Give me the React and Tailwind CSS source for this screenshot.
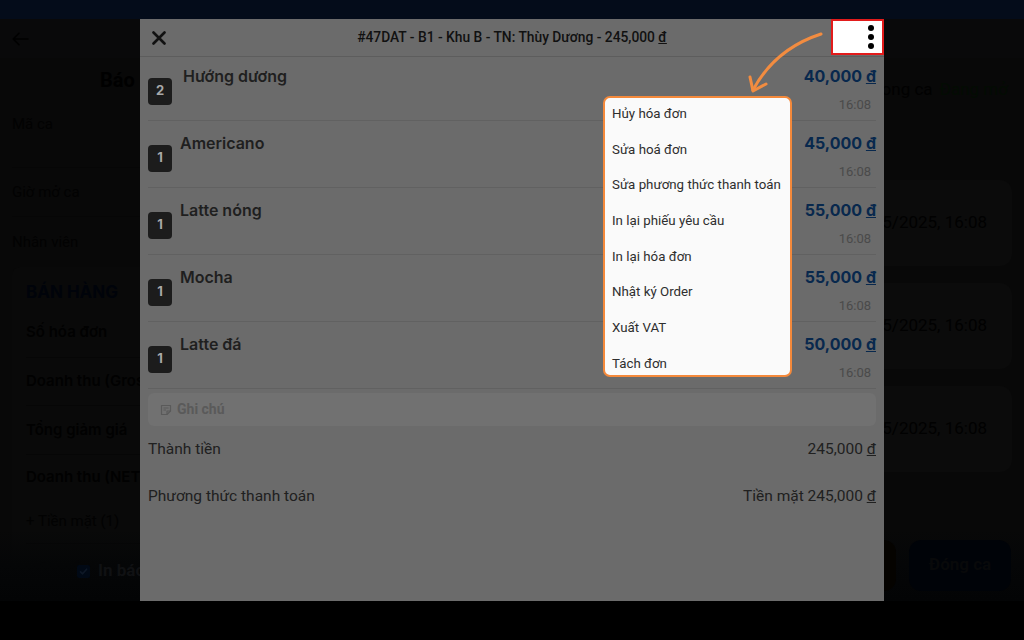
import React from "react";

const items = [
  { qty: 2, name: "Hướng dương", price: "40,000", first: true },
  { qty: 1, name: "Americano", price: "45,000" },
  { qty: 1, name: "Latte nóng", price: "55,000" },
  { qty: 1, name: "Mocha", price: "55,000" },
  { qty: 1, name: "Latte đá", price: "50,000" },
];

const menu = [
  "Hủy hóa đơn",
  "Sửa hoá đơn",
  "Sửa phương thức thanh toán",
  "In lại phiếu yêu cầu",
  "In lại hóa đơn",
  "Nhật ký Order",
  "Xuất VAT",
  "Tách đơn",
];

function BackgroundPage() {
  return (
    <div className="flex h-[582px] flex-col bg-[#080808] font-['Roboto',sans-serif]">
      <div className="flex h-[39px] shrink-0 items-center bg-[#09090a] pl-[12px]">
        <svg width="17" height="14" viewBox="0 0 17 14" fill="none" stroke="#000000" strokeWidth="1.6" strokeLinecap="round" strokeLinejoin="round">
          <path d="M16 7H1.5M7 1.2L1.2 7 7 12.8" />
        </svg>
      </div>
      <div className="flex flex-1">
        <div className="w-[500px] px-[12px]">
          <div className="flex h-[44px] items-center pl-[88px] text-[20px] font-bold text-[#000000]">Báo cáo ca</div>
          <div className="h-[66px] border-b border-[#060606] pt-[13px] text-[15px] leading-[18px] text-[#020202]">Mã ca</div>
          <div className="flex h-[49px] items-center border-b border-[#060606] text-[15px] text-[#020202]">Giờ mở ca</div>
          <div className="flex h-[50px] items-center text-[15px] text-[#020202]">Nhân viên</div>
          <div className="rounded-lg bg-[#090909] px-[14px] pt-[14px] font-['Inter',sans-serif]">
            <div className="text-[17px] font-bold leading-[22px] text-[#00030a]">BÁN HÀNG</div>
            <div className="mt-[5px] flex h-[50px] items-center border-b border-[#060606] text-[15px] font-semibold text-[#010101]">Số hóa đơn</div>
            <div className="flex h-[48px] items-center border-b border-[#060606] text-[15px] font-semibold text-[#010101]">Doanh thu (Gross)</div>
            <div className="flex h-[49px] items-center border-b border-[#060606] text-[15px] font-semibold text-[#010101]">Tổng giảm giá</div>
            <div className="flex h-[45px] items-center text-[15px] font-semibold text-[#010101]">Doanh thu (NET)</div>
            <div className="flex h-[44px] items-center border-b border-[#060606] font-['Roboto',sans-serif] text-[15px] text-[#020202]">+ Tiền mặt (1)</div>
            <div className="flex h-[48px] items-center font-['Roboto',sans-serif] text-[15px] text-[#020202]">+ Chuyển khoản (0)</div>
          </div>
        </div>
        <div className="flex flex-1 flex-col pl-[12px] pr-[12px]">
          <div className="flex h-[64px] items-center justify-end gap-[7px] pr-[4px] text-[17px]">
            <span className="text-[#010101]">Trạng thái trong ca</span>
            <span className="text-[#030c03]">Đang mở</span>
          </div>
          <div className="mt-[58px] flex flex-col gap-[17px]">
            {[0, 1, 2].map((i) => (
              <div key={i} className="flex h-[86px] items-center justify-end rounded-xl bg-[#0b0b0b] pr-[25px] text-[17px] text-[#010101]">
                Mở ca: 19/05/2025, 16:08
              </div>
            ))}
          </div>
        </div>
      </div>
    </div>
  );
}

function BottomBar() {
  return (
    <div className="absolute bottom-0 left-0 right-0 flex h-[72px] items-center bg-gradient-to-b from-transparent via-[#050607] to-[#030405] pl-[77px] pr-[13px] font-['Roboto',sans-serif]">
      <div className="mt-[12px] flex items-center gap-[8px]">
        <div className="flex h-[13px] w-[13px] items-center justify-center rounded-[2px] bg-[#010915]">
          <svg width="9" height="9" viewBox="0 0 9 9" fill="none" stroke="#0e1826" strokeWidth="1.6" strokeLinecap="round" strokeLinejoin="round">
            <path d="M1.5 4.8L3.6 6.8 7.6 2.2" />
          </svg>
        </div>
        <span className="text-[17px] font-bold text-[#101113]">In báo cáo</span>
      </div>
      <div className="ml-auto flex items-center gap-[13px]">
        <div className="flex h-[51px] w-[116px] items-center justify-center rounded-xl bg-[#050300] text-[17px] font-bold text-[#0a0b0c]">Tạm ca</div>
        <div className="flex h-[51px] w-[102px] items-center justify-center rounded-xl bg-[#000308] text-[17px] font-bold text-[#08090a]">Đóng ca</div>
      </div>
    </div>
  );
}

function Modal() {
  return (
    <div className="absolute left-[140px] top-0 flex h-[582px] w-[744px] flex-col bg-[#6b6b6b] font-['Roboto',sans-serif]">
      <div className="relative flex h-[38px] shrink-0 items-center justify-center border-b border-[#5d5d5d]">
        <svg className="absolute left-[12px] top-[12px]" width="14" height="14" viewBox="0 0 14 14" fill="none" stroke="#111" strokeWidth="2.6" strokeLinecap="round">
          <path d="M1.5 1.5L12.5 12.5M12.5 1.5L1.5 12.5" />
        </svg>
        <span className="text-[13.8px] font-medium text-[#111]">#47DAT - B1 - Khu B - TN: Thùy Dương - 245,000 <span className="underline">đ</span></span>
      </div>
      <div className="flex-1 overflow-hidden px-[8px]">
        <div className="-mt-[3px]">
          {items.map((it, i) => (
            <div key={i} className="flex h-[67px] border-b border-[#616161] font-['Inter',sans-serif]">
              <div className="flex items-center pt-[8px]">
                <div className="flex h-[27px] w-[24px] items-center justify-center rounded-[4px] bg-[#1c1c1c] text-[13px] font-bold text-[#a8a8a8]">{it.qty}</div>
              </div>
              <div className={"pt-[13px] text-[16px] font-semibold leading-[19px] text-[#1f1f1f] " + (it.first ? "pl-[11px]" : "pl-[8px]")}>{it.name}</div>
              <div className="ml-auto flex flex-col items-end pt-[13px]">
                <div className="text-[16px] font-bold leading-[19px] text-[#08284d]">
                  {it.price} <span className="underline">đ</span>
                </div>
                <div className="mt-[11px] pr-[5px] font-['Roboto',sans-serif] text-[13px] leading-[16px] text-[#4a4a4a]">16:08</div>
              </div>
            </div>
          ))}
        </div>
        <div className="mt-[4px] flex h-[33px] items-center gap-[5px] rounded-md bg-[#717171] pl-[12px]">
          <svg width="12" height="12" viewBox="0 0 12 12" fill="none" stroke="#5a5a5a" strokeWidth="1.2" strokeLinejoin="round">
            <path d="M1.5 1.5h9v5.5L7 10.5H1.5z" />
            <path d="M7 10.5V7h3.5M3.5 4h5M3.5 6h2.5" />
          </svg>
          <span className="text-[14px] font-bold text-[#5a5a5a]">Ghi chú</span>
        </div>
        <div className="flex h-[47px] items-center justify-between text-[15.5px] text-[#202020]">
          <span>Thành tiền</span>
          <span>245,000 <span className="underline">đ</span></span>
        </div>
        <div className="flex h-[47px] items-center justify-between text-[15.5px] text-[#202020]">
          <span>Phương thức thanh toán</span>
          <span>Tiền mặt 245,000 <span className="underline">đ</span></span>
        </div>
      </div>
    </div>
  );
}

function Dropdown() {
  return (
    <div className="absolute left-[603px] top-[77px] h-[281px] w-[189px] overflow-hidden rounded-[7px] border-2 border-[#f4893b] bg-[#fafafa] font-['Roboto',sans-serif]">
      <div className="-mt-[2px]">
        {menu.map((m) => (
          <div key={m} className="flex h-[35.7px] items-center whitespace-nowrap pl-[7px] text-[13.3px] text-[#2e2e2e]">{m}</div>
        ))}
      </div>
    </div>
  );
}

function Annotations() {
  return (
    <>
      <div className="absolute left-[831px] top-0 flex h-[36px] w-[53px] flex-col items-end justify-center gap-[3px] border-2 border-[#e21b1b] bg-white pr-[8px]">
        <div className="h-[6px] w-[6px] rounded-full bg-black" />
        <div className="h-[6px] w-[6px] rounded-full bg-black" />
        <div className="h-[6px] w-[6px] rounded-full bg-black" />
      </div>
      <svg className="pointer-events-none absolute left-0 top-0" width="1024" height="582" viewBox="0 0 1024 582" fill="none" stroke="#f28c40" strokeWidth="3" strokeLinecap="round" strokeLinejoin="round">
        <path d="M821 15 Q775 30 753 71" />
        <path d="M750 58 L753 72 L766 65" />
      </svg>
    </>
  );
}

export default function App() {
  return (
    <div className="flex h-[640px] w-[1024px] flex-col overflow-hidden bg-black">
      <div className="h-[19px] shrink-0 bg-[#040c1a]" />
      <div className="relative h-[582px] shrink-0 overflow-hidden bg-[#080808]">
        <BackgroundPage />
        <BottomBar />
        <Modal />
        <Dropdown />
        <Annotations />
      </div>
      <div className="flex-1 bg-black" />
    </div>
  );
}
